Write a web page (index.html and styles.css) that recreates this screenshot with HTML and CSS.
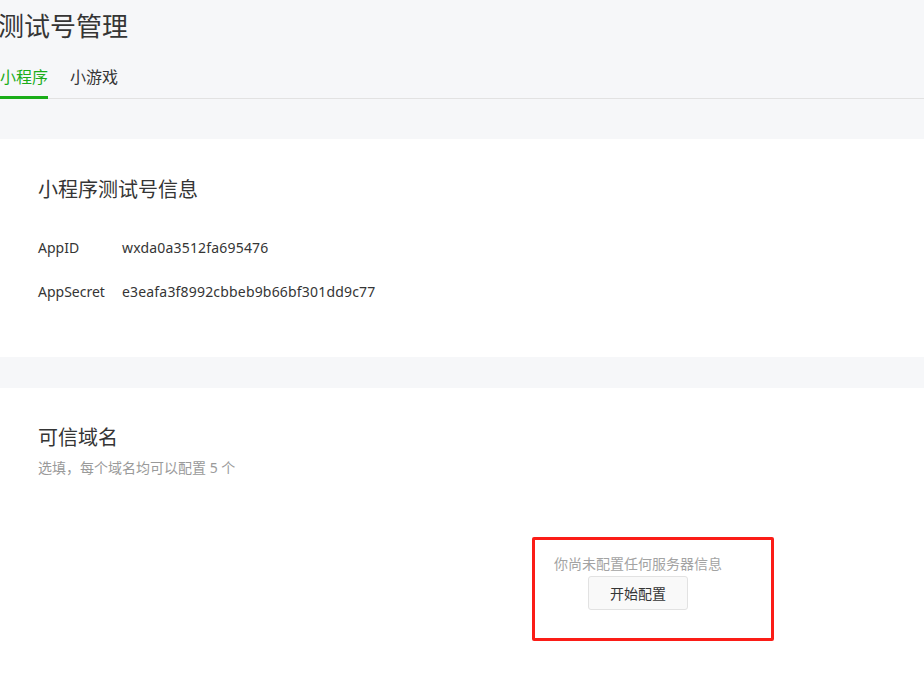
FILE: index.html
```html
<!DOCTYPE html>
<html lang="zh-CN">
<head>
<meta charset="utf-8">
<title>测试号管理</title>
<link rel="stylesheet" href="styles.css">
</head>
<body>
<div class="header">
  <h1 class="page-title">测试号管理</h1>
  <div class="tabs">
    <span class="tab active">小程序</span>
    <span class="tab">小游戏</span>
  </div>
</div>

<section class="card card-info">
  <h2 class="card-title">小程序测试号信息</h2>
  <div class="info-row"><span class="info-label">AppID</span><span class="info-value">wxda0a3512fa695476</span></div>
  <div class="info-row"><span class="info-label">AppSecret</span><span class="info-value">e3eafa3f8992cbbeb9b66bf301dd9c77</span></div>
</section>

<section class="card card-domain">
  <h2 class="card-title">可信域名</h2>
  <p class="card-desc">选填，每个域名均可以配置 5 个</p>
  <div class="highlight">
    <div class="empty">
      <p class="empty-text">你尚未配置任何服务器信息</p>
      <button class="btn">开始配置</button>
    </div>
  </div>
</section>
</body>
</html>
```

FILE: styles.css
```css
html, body {
  margin: 0;
  padding: 0;
}
body {
  background: #f6f7f9;
  font-family: "Noto Sans", "Noto Sans CJK SC", sans-serif;
  color: #353535;
  overflow: hidden;
  height: 689px;
}
.header {
  padding-top: 8px;
}
.page-title {
  margin: 0 0 0 -2px;
  font-size: 26px;
  line-height: 36px;
  font-weight: 400;
  color: #353535;
}
.tabs {
  margin-top: 19px;
  display: flex;
  gap: 22px;
  border-bottom: 1px solid #e2e2e2;
}
.tab {
  font-size: 16px;
  line-height: 28px;
  padding-bottom: 5px;
  border-bottom: 3px solid transparent;
  margin-bottom: -1px;
  color: #353535;
}
.tab.active {
  color: #1aad19;
  border-bottom-color: #1aad19;
}
.card {
  background: #fff;
  padding-left: 38px;
}
.card-info {
  margin-top: 40px;
  padding-top: 37px;
  padding-bottom: 43px;
}
.card-title {
  margin: 0;
  font-size: 20px;
  line-height: 28px;
  font-weight: 400;
  color: #353535;
}
.card-info .card-title {
  margin-bottom: 22px;
}
.info-row {
  display: flex;
  font-size: 14px;
  line-height: 44px;
}
.info-label {
  width: 84px;
}
.info-value {
  letter-spacing: 0.18px;
}
.card-domain {
  margin-top: 31px;
  padding-top: 36px;
  padding-bottom: 60px;
}
.card-desc {
  margin: 6px 0 0;
  font-size: 14px;
  line-height: 20px;
  color: #9a9a9a;
}
.highlight {
  margin-top: 59px;
  margin-left: 494px;
  width: 236px;
  height: 98px;
  border: 3px solid #fb1d17;
  border-radius: 2px;
  box-sizing: content-box;
}
.empty {
  display: inline-flex;
  flex-direction: column;
  align-items: center;
  margin-left: 19px;
  margin-top: 14px;
}
.empty-text {
  margin: 0 0 2px;
  font-size: 14px;
  line-height: 20px;
  color: #a3a3a3;
}
.btn {
  width: 100px;
  height: 34px;
  background: #f9f9f9;
  border: 1px solid #e2e2e2;
  border-radius: 3px;
  font-family: inherit;
  font-size: 14px;
  color: #353535;
  padding: 0;
}
```
